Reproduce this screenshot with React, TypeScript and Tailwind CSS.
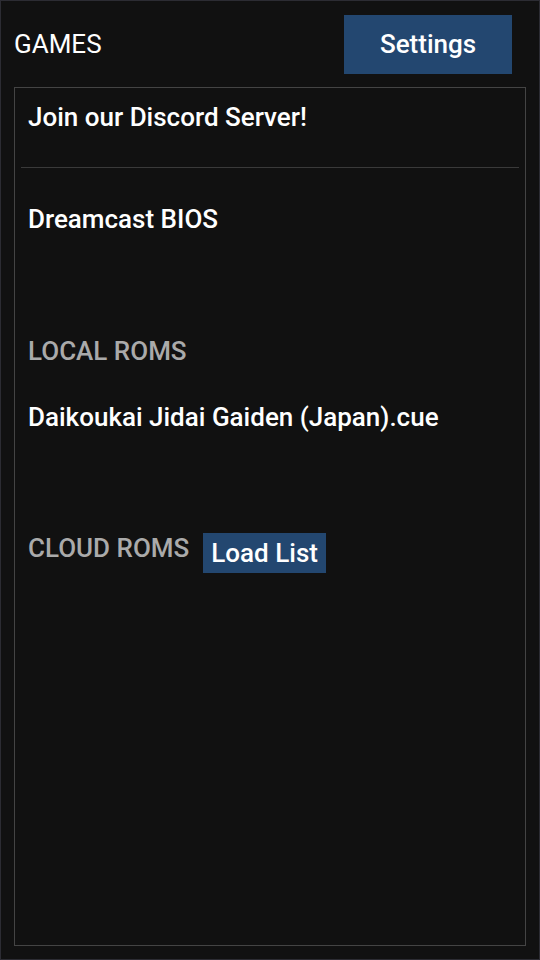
import React from "react";

const font = { fontFamily: "Roboto, 'Noto Sans', sans-serif" };

const Row = ({ children, className = "" }: { children: React.ReactNode; className?: string }) => (
  <div className={`px-[7px] text-[26px] leading-[30px] font-medium text-white ${className}`}>{children}</div>
);

export default function App() {
  return (
    <div
      className="h-[960px] w-full bg-[#111111] border border-[#2c2c33] flex flex-col"
      style={font}
    >
      {/* Header */}
      <header className="h-[86px] flex items-center justify-between pl-[13px] pr-[27px] shrink-0">
        <span className="text-[26px] leading-[30px] text-white">GAMES</span>
        <button className="w-[168px] h-[59px] bg-[#234770] text-white text-[26px] leading-[30px] font-medium">
          Settings
        </button>
      </header>

      {/* Games list */}
      <div className="mx-[13px] mb-[13px] flex-1 border border-[#444444] px-[6px]">
        <Row className="h-[80px] pt-[14px] border-b border-[#3a3a3a]">Join our Discord Server!</Row>
        <Row className="pt-[36px]">Dreamcast BIOS</Row>

        <div className="mt-[102px] px-[7px] text-[26px] font-medium leading-[30px] text-[#aaaaaa]">
          LOCAL ROMS
        </div>
        <Row className="mt-[36px]">Daikoukai Jidai Gaiden (Japan).cue</Row>

        <div className="mt-[101px] px-[7px] flex items-start gap-[14px]">
          <span className="text-[26px] font-medium leading-[30px] text-[#aaaaaa]">CLOUD ROMS</span>
          <button className="h-[40px] px-[8px] py-[5px] bg-[#234770] text-white text-[26px] font-medium leading-[30px]">
            Load List
          </button>
        </div>
      </div>
    </div>
  );
}
